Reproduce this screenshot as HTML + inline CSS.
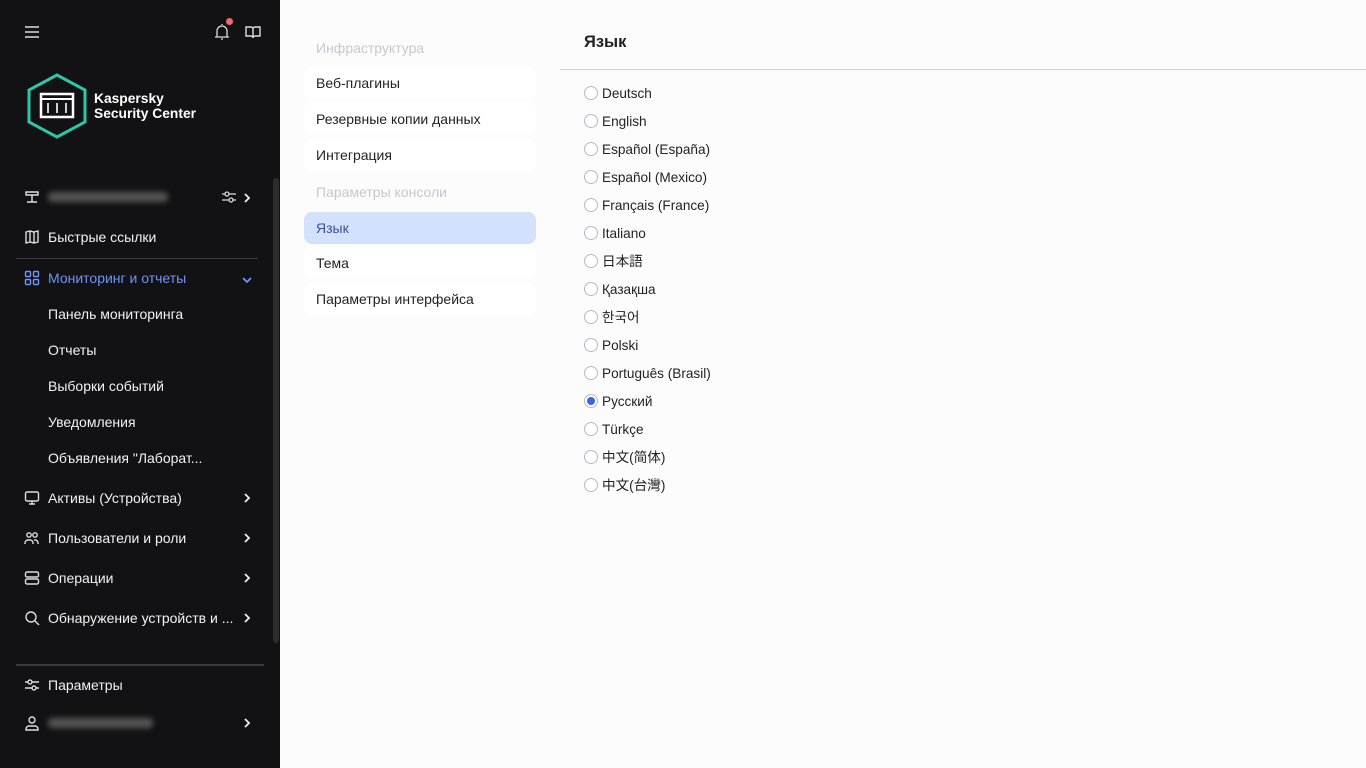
<!DOCTYPE html>
<html><head><meta charset="utf-8"><style>
*{box-sizing:border-box;margin:0;padding:0}
body{width:1366px;height:768px;overflow:hidden;background:#fcfcfd;font-family:"Liberation Sans","Noto Sans CJK JP",sans-serif;font-size:14px;position:relative}
.sb{position:absolute;left:0;top:0;width:280px;height:768px;background:#121214;color:#fff}
.it{position:absolute;left:24px;height:20px;display:flex;align-items:center;font-size:14px;color:#f2f2f2}
.it svg{width:16px;height:16px;margin-right:8px;stroke:#ddd;fill:none;stroke-width:1.4}
.ch{position:absolute;left:242px;width:10px;height:10px}
.sub{position:absolute;left:48px;font-size:14px;color:#f2f2f2}
.blur{display:inline-block;height:10px;background:#555;border-radius:4px;filter:blur(3px)}
.ml{position:absolute;left:304px;width:232px;height:32px;border-radius:8px;background:#fff;padding-left:12px;line-height:32px;color:#222}
.hd{position:absolute;left:316px;color:#c8c8cc}
.r{position:absolute;left:584px;height:20px;line-height:20px;color:#222;font-size:13.6px;white-space:nowrap;margin-top:1px}
.r i{width:14px;height:14px;border:1px solid #b8b8c0;border-radius:50%;margin-right:4px;display:inline-block;background:#fff;position:relative;vertical-align:-2px}
.r i.on::after{content:"";position:absolute;left:2px;top:2px;width:8px;height:8px;border-radius:50%;background:#3c67e3}
</style></head><body>
<div class="sb">
<svg style="position:absolute;left:25px;top:26px" width="14" height="12"><path d="M0 1h14M0 6h14M0 11h14" stroke="#ddd" stroke-width="1.5"/></svg>
<svg style="position:absolute;left:213px;top:22px" width="18" height="18" fill="none" stroke="#ddd" stroke-width="1.3"><path d="M4 15V9a5 5 0 0110 0v6M2 15h14M8 17h2M9 3V2"/></svg>
<div style="position:absolute;left:226px;top:18px;width:7px;height:7px;border-radius:50%;background:#f06a6a"></div>
<svg style="position:absolute;left:245px;top:25px" width="16" height="14" fill="none" stroke="#ddd" stroke-width="1.4"><path d="M1 2h5a2 2 0 012 2v9a2 2 0 00-2-2H1zM15 2h-5a2 2 0 00-2 2v9a2 2 0 012-2h5z"/></svg>
<svg style="position:absolute;left:26px;top:73px" width="62" height="66"><polygon points="31,2 59,17 59,49 31,64 3,49 3,17" fill="none" stroke="#2ec5a8" stroke-width="3"/><rect x="15" y="21" width="32" height="23" fill="none" stroke="#fff" stroke-width="2.5"/><path d="M15 26h32" stroke="#fff" stroke-width="2"/><path d="M22 30v10M31 30v10M40 30v10" stroke="#fff" stroke-width="1.6"/></svg>
<div style="position:absolute;left:94px;top:91px;font-weight:bold;font-size:13.8px;line-height:15px">Kaspersky<br>Security Center</div>
<div class="it" style="top:187px"><svg viewBox="0 0 16 16"><path d="M2 3h12v3H2zM8 6v7M3 13h10"/></svg><span class="blur" style="width:120px"></span></div>
<svg style="position:absolute;left:221px;top:189px" width="16" height="16" fill="none" stroke="#ddd" stroke-width="1.3"><path d="M1 5h14M1 11h14"/><circle cx="6" cy="5" r="2" fill="#121214"/><circle cx="10" cy="11" r="2" fill="#121214"/></svg>
<svg class="ch" style="top:193px" viewBox="0 0 10 10"><path d="M3 1l4 4-4 4" stroke="#eee" stroke-width="1.8" fill="none"/></svg>
<div class="it" style="top:227px"><svg viewBox="0 0 16 16"><path d="M2 3l4-1 4 1 4-1v11l-4 1-4-1-4 1zM6 2v11M10 3v11"/></svg>Быстрые ссылки</div>
<div style="position:absolute;left:16px;top:258px;width:242px;height:1px;background:#3a3a3e"></div>
<div class="it" style="top:268px;color:#6f94f5"><svg viewBox="0 0 16 16" style="stroke:#6f94f5"><rect x="1.5" y="1.5" width="5" height="5" rx="1"/><rect x="9.5" y="1.5" width="5" height="5" rx="1"/><rect x="1.5" y="9.5" width="5" height="5" rx="1"/><rect x="9.5" y="9.5" width="5" height="5" rx="1"/></svg>Мониторинг и отчеты</div>
<svg class="ch" style="top:275px" viewBox="0 0 10 10"><path d="M1 3l4 4 4-4" stroke="#6f94f5" stroke-width="1.8" fill="none"/></svg>
<div class="sub" style="top:306px">Панель мониторинга</div>
<div class="sub" style="top:342px">Отчеты</div>
<div class="sub" style="top:378px">Выборки событий</div>
<div class="sub" style="top:414px">Уведомления</div>
<div class="sub" style="top:450px">Объявления "Лаборат...</div>
<div class="it" style="top:488px"><svg viewBox="0 0 16 16"><rect x="1.5" y="2" width="13" height="9" rx="1.5"/><path d="M8 11v3M5 14h6"/></svg>Активы (Устройства)</div>
<svg class="ch" style="top:493px" viewBox="0 0 10 10"><path d="M3 1l4 4-4 4" stroke="#eee" stroke-width="1.8" fill="none"/></svg>
<div class="it" style="top:528px"><svg viewBox="0 0 16 16"><circle cx="5" cy="5" r="2.2"/><circle cx="11" cy="5" r="2.2"/><path d="M1 14v-1a3 3 0 013-3h2a3 3 0 013 3v1M10 10h1a3 3 0 013 3v1"/></svg>Пользователи и роли</div>
<svg class="ch" style="top:533px" viewBox="0 0 10 10"><path d="M3 1l4 4-4 4" stroke="#eee" stroke-width="1.8" fill="none"/></svg>
<div class="it" style="top:568px"><svg viewBox="0 0 16 16"><rect x="1.5" y="2" width="13" height="5" rx="1.5"/><rect x="1.5" y="9" width="13" height="5" rx="1.5"/></svg>Операции</div>
<svg class="ch" style="top:573px" viewBox="0 0 10 10"><path d="M3 1l4 4-4 4" stroke="#eee" stroke-width="1.8" fill="none"/></svg>
<div class="it" style="top:608px"><svg viewBox="0 0 16 16"><circle cx="7" cy="7" r="5"/><path d="M11 11l4 4"/></svg>Обнаружение устройств и ...</div>
<svg class="ch" style="top:613px" viewBox="0 0 10 10"><path d="M3 1l4 4-4 4" stroke="#eee" stroke-width="1.8" fill="none"/></svg>
<div style="position:absolute;left:273px;top:178px;width:6px;height:465px;background:#2b2b30;border-radius:3px"></div>
<div style="position:absolute;left:16px;top:664px;width:248px;height:2px;background:#3a3a3e"></div>
<div class="it" style="top:675px"><svg viewBox="0 0 16 16"><path d="M1 5h14M1 11h14"/><circle cx="6" cy="5" r="2" fill="#121214"/><circle cx="10" cy="11" r="2" fill="#121214"/></svg>Параметры</div>
<div class="it" style="top:713px"><svg viewBox="0 0 16 16"><circle cx="8" cy="5" r="3"/><path d="M2 15v-1a3 3 0 013-3h6a3 3 0 013 3v1z"/></svg><span class="blur" style="width:105px"></span></div>
<svg class="ch" style="top:718px" viewBox="0 0 10 10"><path d="M3 1l4 4-4 4" stroke="#eee" stroke-width="1.8" fill="none"/></svg>
</div>
<div class="hd" style="top:40px">Инфраструктура</div>
<div class="ml" style="top:67px">Веб-плагины</div>
<div class="ml" style="top:103px">Резервные копии данных</div>
<div class="ml" style="top:139px">Интеграция</div>
<div class="hd" style="top:184px">Параметры консоли</div>
<div class="ml" style="top:212px;background:#d3e1fd;color:#3c4fa0">Язык</div>
<div class="ml" style="top:247px">Тема</div>
<div class="ml" style="top:283px">Параметры интерфейса</div>
<div style="position:absolute;left:584px;top:33px;font-size:16.5px;font-weight:bold;color:#222">Язык</div>
<div style="position:absolute;left:560px;top:69px;width:806px;height:1px;background:#d5d5d8"></div>
<div class="r" style="top:83px"><i></i>Deutsch</div>
<div class="r" style="top:111px"><i></i>English</div>
<div class="r" style="top:139px"><i></i>Español (España)</div>
<div class="r" style="top:167px"><i></i>Español (Mexico)</div>
<div class="r" style="top:195px"><i></i>Français (France)</div>
<div class="r" style="top:223px"><i></i>Italiano</div>
<div class="r" style="top:251px"><i></i>日本語</div>
<div class="r" style="top:279px"><i></i>Қазақша</div>
<div class="r" style="top:307px"><i></i>한국어</div>
<div class="r" style="top:335px"><i></i>Polski</div>
<div class="r" style="top:363px"><i></i>Português (Brasil)</div>
<div class="r" style="top:391px"><i class="on"></i>Русский</div>
<div class="r" style="top:419px"><i></i>Türkçe</div>
<div class="r" style="top:447px"><i></i>中文(简体)</div>
<div class="r" style="top:475px"><i></i>中文(台灣)</div>
</body></html>
